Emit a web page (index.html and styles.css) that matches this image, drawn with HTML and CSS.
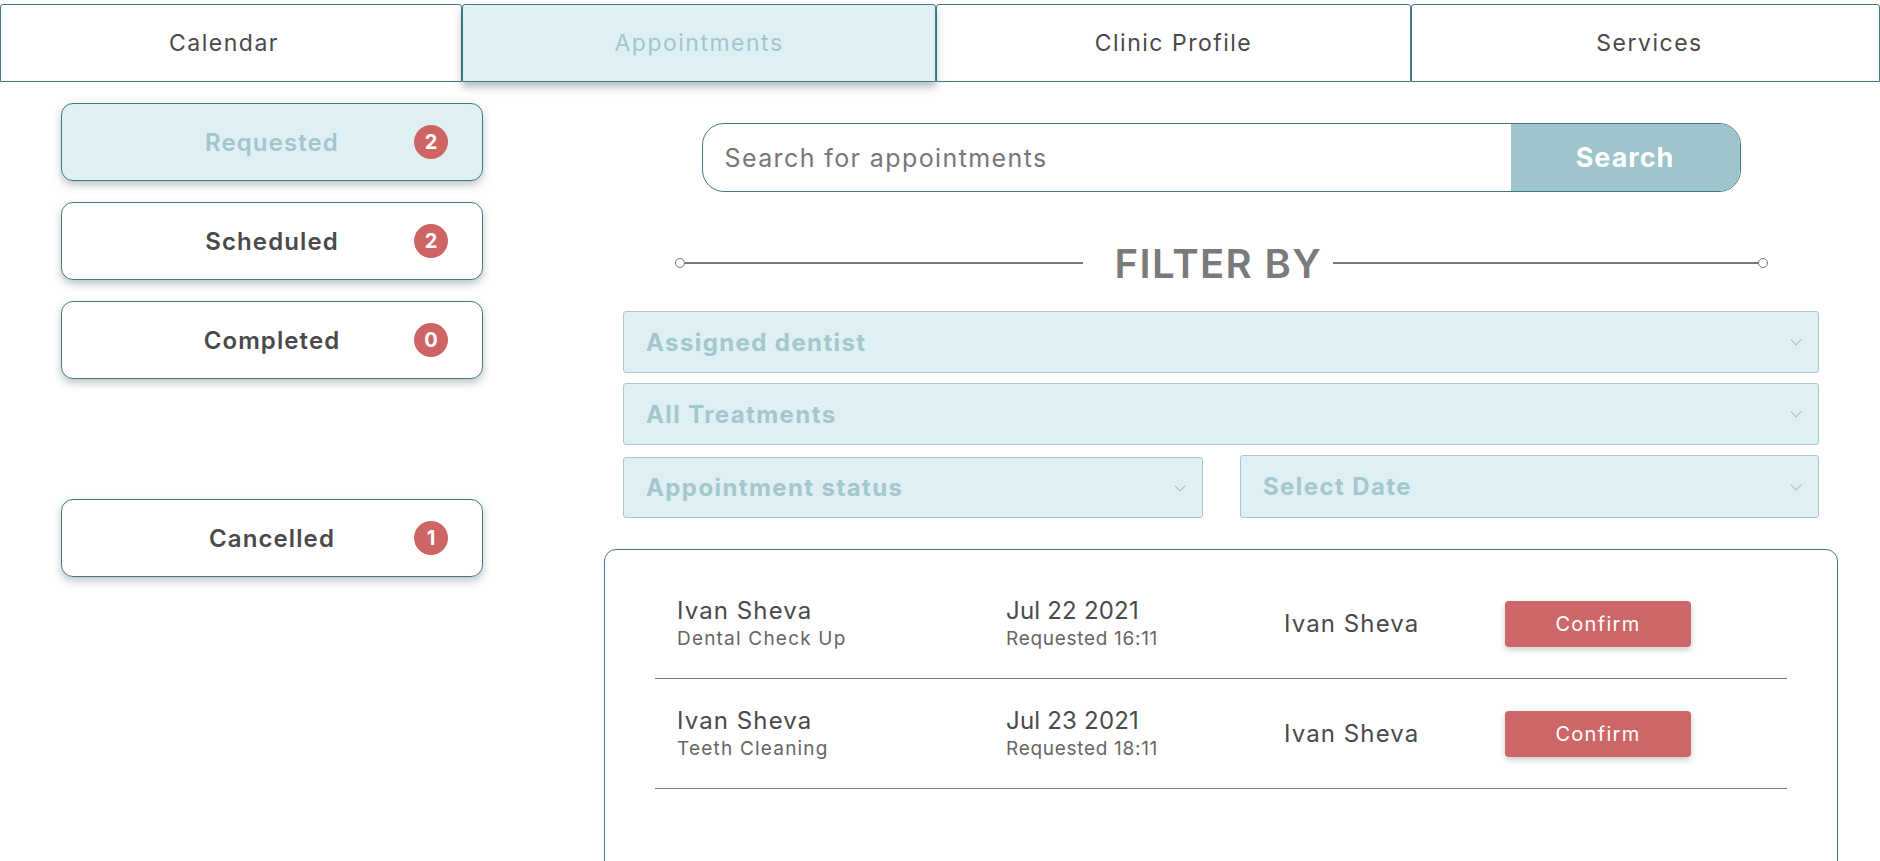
FILE: index.html
```html
<!DOCTYPE html>
<html lang="en">
<head>
<meta charset="utf-8">
<title>Appointments</title>
<link rel="stylesheet" href="styles.css">
</head>
<body>
<nav class="tabs">
  <div class="tab tab-first">Calendar</div>
  <div class="tab tab-active">Appointments</div>
  <div class="tab">Clinic Profile</div>
  <div class="tab tab-last">Services</div>
</nav>
<main class="main">
  <aside class="sidebar">
    <div class="status status-active"><span class="status-label">Requested</span><span class="badge">2</span></div>
    <div class="status"><span class="status-label">Scheduled</span><span class="badge">2</span></div>
    <div class="status"><span class="status-label">Completed</span><span class="badge">0</span></div>
    <div class="status-spacer"></div>
    <div class="status"><span class="status-label">Cancelled</span><span class="badge">1</span></div>
  </aside>
  <section class="content">
    <div class="search">
      <div class="search-input">Search for appointments</div>
      <div class="search-btn">Search</div>
    </div>
    <div class="filter-title">
      <span class="dot"></span><span class="line line-left"></span>
      <span class="filter-text">FILTER BY</span>
      <span class="line"></span><span class="dot"></span>
    </div>
    <div class="filters">
      <div class="select"><span>Assigned dentist</span><span class="chev"></span></div>
      <div class="select"><span>All Treatments</span><span class="chev"></span></div>
      <div class="select-row">
        <div class="select select-status"><span>Appointment status</span><span class="chev"></span></div>
        <div class="select select-date"><span>Select Date</span><span class="chev"></span></div>
      </div>
    </div>
    <div class="card">
      <div class="row">
        <div class="col col-name"><div class="main-text">Ivan Sheva</div><div class="sub-text">Dental Check Up</div></div>
        <div class="col col-date"><div class="main-text">Jul 22 2021</div><div class="sub-text">Requested 16:11</div></div>
        <div class="col col-doc"><div class="main-text">Ivan Sheva</div></div>
        <div class="col col-btn"><div class="confirm">Confirm</div></div>
      </div>
      <div class="row">
        <div class="col col-name"><div class="main-text">Ivan Sheva</div><div class="sub-text">Teeth Cleaning</div></div>
        <div class="col col-date"><div class="main-text">Jul 23 2021</div><div class="sub-text">Requested 18:11</div></div>
        <div class="col col-doc"><div class="main-text">Ivan Sheva</div></div>
        <div class="col col-btn"><div class="confirm">Confirm</div></div>
      </div>
    </div>
  </section>
</main>
</body>
</html>
```
FILE: styles.css
```css
* { box-sizing: border-box; }
html, body { margin: 0; padding: 0; background: #ffffff; }
body {
  font-family: Inter, "Open Sans", sans-serif;
  color: #4a4a4a;
  overflow: hidden;
  height: 861px;
}

/* Tabs */
.tabs {
  display: grid;
  grid-template-columns: 462px 474px 475px 1fr;
  margin-top: 4px;
  height: 78px;
}
.tab {
  border: 1px solid #437b85;
  border-radius: 3px 3px 0 0;
  display: flex;
  align-items: center;
  justify-content: center;
  padding-bottom: 1px;
  font-size: 23px;
  letter-spacing: 1.5px;
  color: #4a4a4a;
  background: #fff;
}
.tab-first { padding-right: 14px; }
.tab-last { padding-left: 8px; }
.tab-active {
  background: #def0f4;
  color: #a2c6cc;
  box-shadow: 0 5px 8px rgba(40, 60, 70, 0.35);
  position: relative;
  z-index: 1;
}

/* Main layout */
.main {
  display: flex;
  gap: 121px;
  padding: 21px 42px 0 61px;
}
.sidebar {
  width: 422px;
  flex: none;
  display: flex;
  flex-direction: column;
  gap: 21px;
}
.status {
  height: 78px;
  border: 1px solid #437b85;
  border-radius: 12px;
  background: #fff;
  box-shadow: 0 4px 8px rgba(40, 60, 70, 0.3);
  display: flex;
  align-items: center;
  justify-content: center;
  position: relative;
}
.status-spacer { height: 78px; }
.status-active { background: #def0f4; }
.status-label {
  font-size: 24px;
  font-weight: 600;
  letter-spacing: 1.1px;
  color: #4a4a4a;
}
.status-active .status-label { color: #a2c6cc; }
.badge {
  position: absolute;
  right: 34px;
  top: 50%;
  transform: translateY(-50%);
  width: 34px;
  height: 34px;
  border-radius: 50%;
  background: #cf6464;
  color: #fff;
  font-weight: 700;
  font-size: 20px;
  display: flex;
  align-items: center;
  justify-content: center;
}

/* Content */
.content {
  flex: 1;
  display: flex;
  flex-direction: column;
  align-items: center;
}
.search {
  margin-top: 20px;
  width: 1039px;
  height: 69px;
  border: 1px solid #437b85;
  border-radius: 22px;
  overflow: hidden;
  display: flex;
}
.search-input {
  flex: 1;
  display: flex;
  align-items: center;
  padding-left: 22px;
  font-size: 25px;
  color: #777;
  letter-spacing: 1.4px;
}
.search-btn {
  width: 229px;
  background: #9dc5cb;
  color: #fff;
  font-weight: 700;
  font-size: 27px;
  letter-spacing: 1px;
  display: flex;
  align-items: center;
  justify-content: center;
}

.filter-title {
  width: 1093px;
  margin-top: 48px;
  height: 46px;
  display: flex;
  align-items: center;
}
.dot {
  width: 10px;
  height: 10px;
  border: 1.5px solid #777;
  border-radius: 50%;
  flex: none;
}
.line {
  flex: 1;
  height: 1.5px;
  background: #777;
}
.line-left { flex: none; width: 398px; }
.filter-text {
  margin: 0 11px 0 32px;
  font-size: 40px;
  font-weight: 600;
  color: #7a7a7a;
  letter-spacing: 1.4px;
}

.filters {
  margin-top: 25px;
  width: 1196px;
  display: flex;
  flex-direction: column;
  gap: 10px;
}
.select {
  height: 62px;
  background: #def0f4;
  border: 1px solid #a6c9ce;
  border-radius: 3px;
  display: flex;
  align-items: center;
  justify-content: space-between;
  padding: 0 20px 0 22px;
  font-size: 24px;
  font-weight: 700;
  color: #a3c7cc;
  letter-spacing: 1.4px;
}
.select-row {
  display: flex;
  gap: 37px;
  align-items: flex-end;
}
.select-status { width: 580px; height: 61px; }
.select-date { flex: 1; height: 63px; }
.chev {
  width: 8px;
  height: 8px;
  border-right: 1.5px solid #b9b9b9;
  border-bottom: 1.5px solid #b9b9b9;
  transform: rotate(45deg) translateY(-3px);
}

.card {
  margin-top: 31px;
  width: 1234px;
  height: 340px;
  border: 1px solid #437b85;
  border-radius: 12px;
  padding: 19px 50px 0 50px;
}
.row {
  height: 110px;
  border-bottom: 1.5px solid #7b7b7b;
  display: flex;
  align-items: center;
  padding-left: 22px;
}
.col-name { width: 329px; }
.col-date { width: 278px; }
.col-doc { width: 221px; }
.main-text {
  font-size: 24px;
  color: #4a4a4a;
  letter-spacing: 1.1px;
  line-height: 30px;
}
.sub-text {
  font-size: 19px;
  color: #666;
  letter-spacing: 1.2px;
  line-height: 26px;
}
.col-date .main-text { letter-spacing: 0.2px; }
.col-date .sub-text { letter-spacing: 0.7px; }
.confirm {
  width: 186px;
  height: 46px;
  background: #cd6767;
  color: #fff;
  border-radius: 4px;
  box-shadow: 0 3px 6px rgba(0, 0, 0, 0.2);
  display: flex;
  align-items: center;
  justify-content: center;
  font-size: 20px;
  letter-spacing: 1.3px;
}
```
